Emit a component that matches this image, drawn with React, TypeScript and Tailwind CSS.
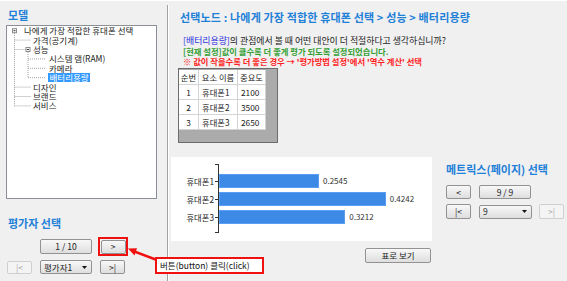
import React from "react";

const tree = [
  { label: "나에게 가장 적합한 휴대폰 선택", pad: "pl-[17px]" },
  { label: "가격(공기계)", pad: "pl-[26px]" },
  { label: "성능", pad: "pl-[26px]" },
  { label: "시스템 램(RAM)", pad: "pl-[42px]" },
  { label: "카메라", pad: "pl-[42px]" },
  { label: "배터리용량", pad: "pl-[41px]", selected: true },
  { label: "디자인", pad: "pl-[26px]" },
  { label: "브랜드", pad: "pl-[26px]" },
  { label: "서비스", pad: "pl-[26px]" },
];

const items = [
  { no: 1, name: "휴대폰1", weight: 2100, score: 0.2545 },
  { no: 2, name: "휴대폰2", weight: 3500, score: 0.4242 },
  { no: 3, name: "휴대폰3", weight: 2650, score: 0.3212 },
];

function Btn({
  children,
  className = "",
  disabled = false,
}: {
  children: React.ReactNode;
  className?: string;
  disabled?: boolean;
}) {
  return (
    <div
      className={
        "flex items-center justify-center rounded-[2px] border text-[8.5px] leading-none " +
        (disabled
          ? "border-[#cfcfcf] bg-[#f4f4f4] text-[#a9a9a9] "
          : "border-[#929292] bg-linear-to-b from-[#f8f8f8] to-[#dedede] text-[#222] ") +
        className
      }
    >
      {children}
    </div>
  );
}

function Combo({ value, className = "" }: { value: string; className?: string }) {
  return (
    <div
      className={
        "flex items-center justify-between rounded-[2px] border border-[#929292] bg-linear-to-b from-[#f8f8f8] to-[#dedede] pl-[3px] pr-[4px] text-[8.5px] leading-none text-[#222] " +
        className
      }
    >
      <span>{value}</span>
      <svg width="5" height="3" viewBox="0 0 5 3">
        <path d="M0 0h5L2.5 3z" fill="#111" />
      </svg>
    </div>
  );
}

function Tree() {
  const cy = (i: number) => 4.7 + 9.4 * i;
  return (
    <div className="relative h-[174px] w-[151px] border border-[#8a8f98] bg-white">
      <svg className="absolute left-0 top-0" width="149" height="172">
        <g stroke="#a3a3a3" strokeWidth="1" strokeDasharray="1 1" fill="none">
          <path d={`M7.5 ${cy(0) + 2.5}V${cy(8)}`} />
          {[1, 6, 7, 8].map((i) => (
            <path key={i} d={`M7.5 ${cy(i)}H24`} />
          ))}
          <path d={`M7.5 ${cy(2)}H19`} />
          <path d={`M21 ${cy(2) + 2.5}V${cy(5)}`} />
          {[3, 4, 5].map((i) => (
            <path key={i} d={`M21 ${cy(i)}H39`} />
          ))}
        </g>
        <g stroke="#8a8a8a" strokeWidth="1" fill="#fff">
          <rect x="5.5" y={cy(0) - 2} width="4" height="4" />
          <rect x="19" y={cy(2) - 2} width="4" height="4" />
        </g>
        <path d={`M6.5 ${cy(0)}H8.5M20 ${cy(2)}H22`} stroke="#333" strokeWidth="1" />
      </svg>
      <div className="relative flex flex-col">
        {tree.map((t) => (
          <div key={t.label} className={"flex h-[9.4px] items-center " + t.pad}>
            <span
              className={
                "whitespace-nowrap text-[8.5px] leading-[9px] " +
                (t.selected ? "bg-[#3399ff] px-[1.5px] text-white" : "text-[#222]")
              }
            >
              {t.label}
            </span>
          </div>
        ))}
      </div>
    </div>
  );
}

function Table() {
  const cell = "flex h-[15px] items-center border-b border-r border-[#d4d4d4] text-[8.3px] leading-none";
  return (
    <div className="ml-[9px] mt-[2px] h-[75px] w-[100px] border border-[#6c6c6c] bg-[#ababab] pt-px">
      <div className="grid w-[87px] grid-cols-[20px_39px_28px] bg-white">
        <div className={cell + " justify-center"}>순번</div>
        <div className={cell + " justify-center"}>요소 이름</div>
        <div className={cell + " justify-center"}>중요도</div>
        {items.map((r) => (
          <React.Fragment key={r.no}>
            <div className={cell + " justify-center"}>{r.no}</div>
            <div className={cell + " pl-[3px]"}>{r.name}</div>
            <div className={cell + " pl-[3px]"}>{r.weight}</div>
          </React.Fragment>
        ))}
      </div>
    </div>
  );
}

function Chart() {
  return (
    <div className="flex h-[84px] w-[261px] bg-white">
      <div className="flex w-[47px] flex-col gap-[4px] pt-[17px]">
        {items.map((r) => (
          <div key={r.no} className="flex h-[14px] items-center justify-end text-[8.3px] leading-none text-[#222]">
            {r.name}
            <span className="ml-px h-px w-[3px] bg-[#333]" />
          </div>
        ))}
      </div>
      <div className="relative mt-[7px] flex h-[69px] flex-col gap-[4px] border-l border-[#333] pt-[10px]">
        <span className="absolute -left-[4px] top-0 h-px w-[3px] bg-[#333]" />
        <span className="absolute -left-[4px] bottom-0 h-px w-[3px] bg-[#333]" />
        {items.map((r) => (
          <div key={r.no} className="flex h-[14px] items-center">
            <div className="h-full border border-[#5b9df0] bg-[#3c89e6]" style={{ width: r.score * 393 }} />
            <span className="ml-[4px] text-[8px] leading-none text-[#333]">{r.score.toFixed(4)}</span>
          </div>
        ))}
      </div>
    </div>
  );
}

export default function App() {
  return (
    <div className="relative h-[281px] w-[567px] overflow-hidden border-t border-white bg-[#f0f0f0] font-['Noto_Sans_CJK_KR',sans-serif] text-[#222]">
      <div className="flex h-full">
        {/* left: model tree + evaluator */}
        <div className="flex w-[167px] flex-col px-[6px] pt-[7px]">
          <div className="ml-[2px] h-[14px] text-[11px] font-bold leading-[14px] text-[#1f80d8]">모델</div>
          <div className="mt-[3px]">
            <Tree />
          </div>
          <div className="ml-[2px] mt-[17px] h-[14px] text-[11px] font-bold leading-[14px] text-[#1f80d8]">평가자 선택</div>
          <div className="mt-[7px] flex items-center">
            <Btn className="ml-[34px] h-[15px] w-[52px]">1 / 10</Btn>
            <div className="ml-[6px] flex h-[19px] w-[30px] items-center justify-center border-2 border-[#f01010]">
              <Btn className="h-[14px] w-[25px]">&gt;</Btn>
            </div>
          </div>
          <div className="mt-[4px] flex items-center">
            <Btn disabled className="ml-px h-[13px] w-[25px]">|&lt;</Btn>
            <Combo value="평가자1" className="ml-[8px] h-[14px] w-[52px]" />
            <Btn className="ml-[8px] h-[14px] w-[25px]">&gt;|</Btn>
          </div>
        </div>

        <div className="mt-[4px] w-px bg-[#a0a0a0]" />
        <div className="mt-[4px] w-px bg-white" />

        {/* right: node detail */}
        <div className="flex flex-1 flex-col">
          <div className="ml-[11px] mt-[9px] h-[14px] whitespace-nowrap text-[11px] font-bold leading-[14px] tracking-[0.15px] text-[#1f80d8]">
            선택노드 : 나에게 가장 적합한 휴대폰 선택 &gt; 성능 &gt; 배터리용량
          </div>
          <div className="ml-[14px] mt-[12px] whitespace-nowrap text-[8.3px] leading-[10px]">
            <div className="text-[8.9px]">
              <span className="text-[#2d2de0]">[배터리용량]</span>의 관점에서 볼 때 어떤 대안이 더 적절하다고 생각하십니까?
            </div>
            <div className="font-bold text-[#36a036]">[현재 설정]값이 클수록 더 좋게 평가 되도록 설정되었습니다.</div>
            <div className="font-bold text-[#ff1f1f]">※ 값이 작을수록 더 좋은 경우 → '평가방법 설정'에서 '역수 계산' 선택</div>
          </div>
          <Table />
          <div className="mt-[14px] flex">
            <div className="ml-[2px] flex flex-col">
              <Chart />
              <Btn className="ml-[194px] mt-[7px] h-[15px] w-[66px]">표로 보기</Btn>
            </div>
            <div className="ml-[14px] flex flex-col">
              <div className="mt-[5px] h-[14px] whitespace-nowrap text-[11px] font-bold leading-[14px] text-[#1f80d8]">
                메트릭스(페이지) 선택
              </div>
              <div className="mt-[9px] flex items-center">
                <Btn className="h-[14px] w-[25px]">&lt;</Btn>
                <Btn className="ml-[8px] h-[14px] w-[52px]">9 / 9</Btn>
              </div>
              <div className="mt-[5px] flex items-center">
                <Btn className="h-[15px] w-[25px]">|&lt;</Btn>
                <Combo value="9" className="ml-[8px] h-[14px] w-[53px]" />
                <Btn disabled className="ml-[7px] h-[15px] w-[25px]">&gt;|</Btn>
              </div>
            </div>
          </div>
        </div>
      </div>

      {/* callout annotation */}
      <svg className="absolute left-[124px] top-[242px]" width="36" height="24" viewBox="0 0 36 24">
        <path d="M33 17L9 8" stroke="#f01010" strokeWidth="2.5" />
        <path d="M4 5.5L13 5.2L10.5 12.5z" fill="#f01010" />
      </svg>
      <div className="absolute left-[155px] top-[256px] flex h-[17px] w-[109px] items-center border-2 border-[#f01010] bg-white pl-[3px] text-[8.5px] leading-none text-[#111]">
        버튼(button) 클릭(click)
      </div>
    </div>
  );
}
